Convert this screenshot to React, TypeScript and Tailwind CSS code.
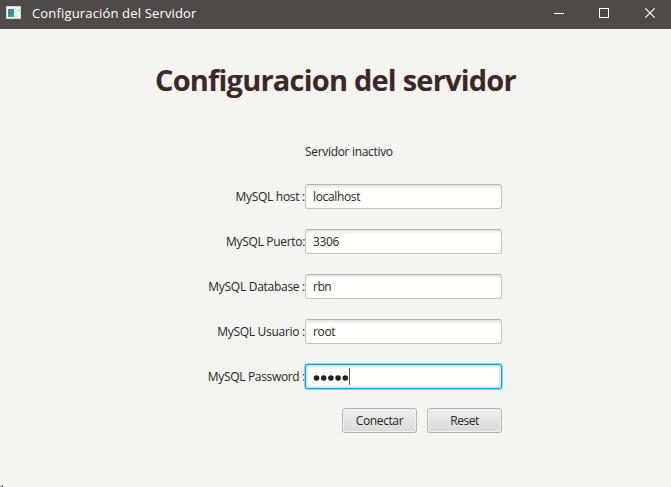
const fields = [
  { label: 'MySQL host :', value: 'localhost', labelClass: 'tracking-[-0.28px]', valueClass: 'tracking-[-0.35px]' },
  { label: 'MySQL Puerto:', value: '3306', labelClass: 'tracking-[-0.3px]', valueClass: 'tracking-[-0.4px]' },
  { label: 'MySQL Database :', value: 'rbn', labelClass: 'tracking-[-0.28px]', valueClass: 'tracking-[-0.5px]' },
  { label: 'MySQL Usuario :', value: 'root', labelClass: 'tracking-[-0.28px]', valueClass: 'tracking-[-0.35px]' },
];

function TitleBar() {
  return (
    <header className="flex h-[29px] items-start bg-[#4e4a47] text-white">
      <svg className="ml-[6px] mt-[6px] shrink-0" width="15" height="13" shapeRendering="crispEdges">
        <rect width="15" height="13" fill="#d5d5d3" />
        <rect x="1" y="1" width="13" height="11" fill="#f4f4f2" />
        <rect x="2" y="3" width="6" height="8" fill="#2f8f98" />
        <rect x="2" y="8" width="6" height="3" fill="#37a184" />
        <rect x="9" y="3" width="2" height="8" fill="#e2eee8" />
        <rect x="12" y="3" width="2" height="3" fill="#c5e0d6" />
      </svg>
      <span className="ml-[11px] mt-[3px] whitespace-nowrap text-[13px] leading-[20px] tracking-[0.16px]">
        Configuración del Servidor
      </span>
      <div className="ml-auto flex">
        <svg width="138" height="29" fill="none" stroke="#fff" strokeWidth="1">
          <path d="M21 13.5h10M66.500 8.500h9v9h-9z" shapeRendering="crispEdges" />
          <path d="M112.300 8.300l9.400 9.400M121.700 8.300l-9.400 9.400" strokeWidth="1.200" />
        </svg>
      </div>
    </header>
  );
}

export default function App() {
  return (
    <div className="flex h-[487px] w-[671px] flex-col overflow-hidden bg-[#f4f4f0] font-['Open_Sans','Noto_Sans',sans-serif] text-[12px] text-[#262626]">
      <TitleBar />
      <main className="flex flex-1 flex-col">
        <h1 className="ml-[155px] mt-[31px] h-[40px] whitespace-nowrap text-[29px] font-bold leading-[40px] tracking-[-0.79px] text-[#3b2929]">
          <span>Configuracion del servidor</span>
        </h1>
        <p className="ml-[305px] mt-[43px] h-[18px] whitespace-nowrap leading-[18px] tracking-[-0.32px]">
          <span>Servidor inactivo</span>
        </p>
        <div className="mt-[23px] flex flex-col gap-[20px]">
          {fields.map((f) => (
            <div key={f.label} className="flex h-[25px] items-center">
              <label className={`flex w-[305px] shrink-0 justify-end whitespace-nowrap leading-[18px] ${f.labelClass}`}>
                {f.label}
              </label>
              <div className="flex h-[25px] w-[197px] items-center rounded-[3px] border border-[#c5c5c2] border-t-[#b5b5b2] bg-[#fffffb] pl-[7px] shadow-[inset_0_3px_3px_-1px_#e4e4e1]">
                <span className={f.valueClass}>{f.value}</span>
              </div>
            </div>
          ))}
          <div className="flex h-[25px] items-center">
            <label className="flex w-[305px] shrink-0 justify-end whitespace-nowrap leading-[18px] tracking-[-0.33px]">
              MySQL Password :
            </label>
            <div className="flex h-[25px] w-[197px] items-center rounded-[3px] border border-[#039ed3] bg-[#fffffb] pl-[7px] shadow-[0_0_0_1px_#8dd4ef,inset_0_0_0_2px_#d5edf5]">
              <svg width="36" height="8" className="mt-[2px] fill-[#222]">
                <circle cx="3.500" cy="4" r="2.800" />
                <circle cx="10.700" cy="4" r="2.800" />
                <circle cx="17.900" cy="4" r="2.800" />
                <circle cx="25.100" cy="4" r="2.800" />
                <circle cx="32.300" cy="4" r="2.800" />
              </svg>
              <span className="h-[17px] w-px bg-[#555]" />
            </div>
          </div>
        </div>
        <div className="ml-[342px] mt-[19px] flex gap-[10px]">
          <button className="h-[25px] w-[75px] rounded-[3px] border border-[#b5b5b2] bg-linear-to-b from-[#eeeeec] to-[#dadad8] tracking-[-0.4px] shadow-[inset_0_0_0_1px_#f1f1ee]">
            Conectar
          </button>
          <button className="h-[25px] w-[75px] rounded-[3px] border border-[#b5b5b2] bg-linear-to-b from-[#eeeeec] to-[#dadad8] tracking-[-0.5px] shadow-[inset_0_0_0_1px_#f1f1ee]">
            Reset
          </button>
        </div>
        <div className="mt-auto flex h-[2px]">
          <span className="h-[2px] w-[2px] bg-[#ccccca]" />
          <span className="h-[2px] w-px bg-[#4e4a47]" />
        </div>
      </main>
    </div>
  );
}
